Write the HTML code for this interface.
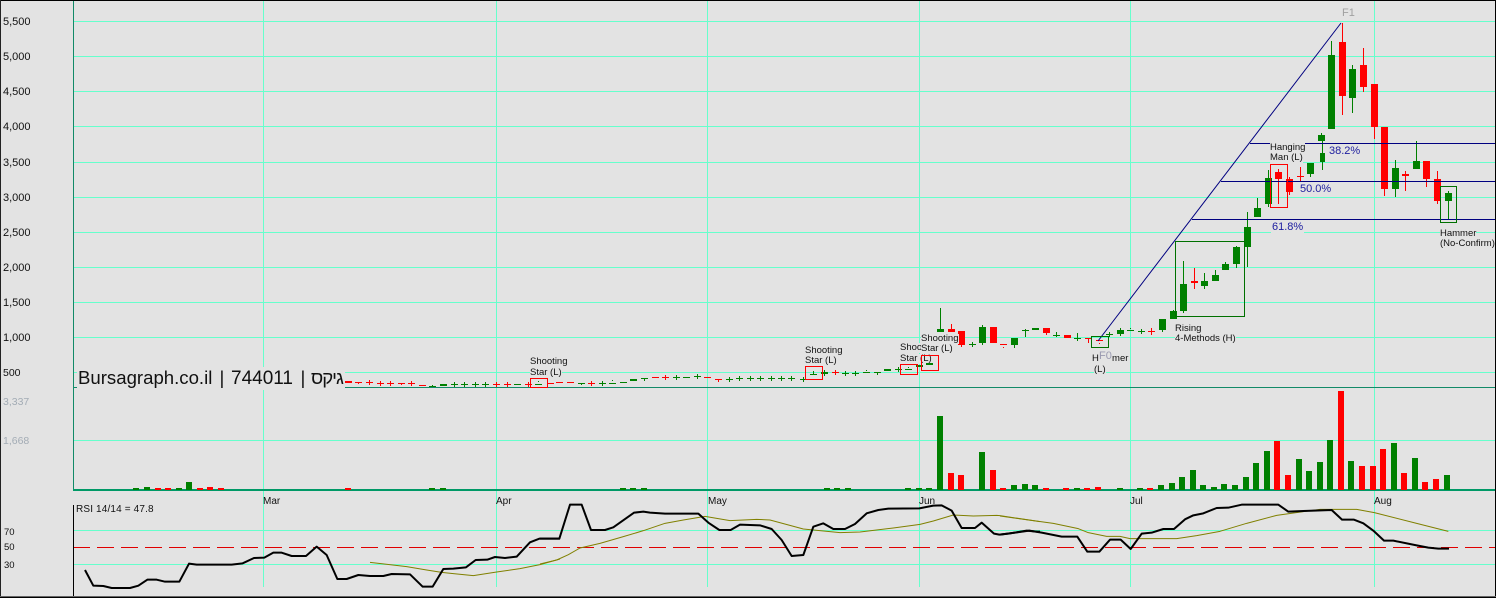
<!DOCTYPE html>
<html><head><meta charset="utf-8"><title>Chart</title>
<style>
html,body{margin:0;padding:0;background:#e3e3e3;}
#c{position:relative;width:1496px;height:598px;overflow:hidden;background:#e3e3e3;font-family:"Liberation Sans",Arial,sans-serif;}
svg{position:absolute;left:0;top:0;}
.t{position:absolute;white-space:pre;background:#e3e3e3;font-size:9.5px;line-height:10px;height:10px;color:#111;}
.a{position:absolute;white-space:pre;font-size:11px;line-height:12px;color:#111;}
.g{color:#a3acb5;font-size:10.5px;}
.f{position:absolute;white-space:pre;background:#e3e3e3;font-size:11px;line-height:12px;color:#2020a0;}
.m{position:absolute;white-space:pre;font-size:10px;line-height:12px;color:#111;}
.h{position:absolute;top:366px;white-space:pre;font-size:18.6px;line-height:23px;color:#111;font-family:'Liberation Sans','Noto Sans CJK JP',sans-serif;}
</style></head><body>
<div id="c">
<svg width="1496" height="598" viewBox="0 0 1496 598" shape-rendering="crispEdges" fill="none">
<!-- grid -->
<path stroke="#66ffcc" d="M73 21.5H1495M73 56.5H1495M73 91.5H1495M73 126.5H1495M73 162.5H1495M73 197.5H1495M73 232.5H1495M73 267.5H1495M73 302.5H1495M73 337.5H1495M73 372.5H1495M73 440.5H1495M73 530.5H1495M73 564.5H1495M263.5 0V587M496.5 0V587M707.5 0V587M919.5 0V587M1130.5 0V587M1374.5 0V587"/>
<path stroke="#e00000" stroke-dasharray="17 7" d="M73 547.5H1495"/>
<!-- axes -->
<path stroke="#128a68" d="M73.5 0V490M73 387.5H1495"/>
<rect x="73" y="489" width="1422" height="2" fill="#009966"/>
<path stroke="#000" d="M73.5 505V596"/>
<!-- volume -->
<path fill="#008000" d="M133 488h6v2h-6zM144 487h6v3h-6zM176 488h6v2h-6zM186 482h6v8h-6zM429 488h6v2h-6zM440 488h6v2h-6zM620 488h6v2h-6zM630 488h6v2h-6zM641 488h6v2h-6zM824 488h6v2h-6zM834 488h6v2h-6zM845 488h6v2h-6zM905 488h6v2h-6zM916 488h6v2h-6zM926 488h6v2h-6zM937 416h6v74h-6zM979 452h6v38h-6zM1011 485h6v5h-6zM1022 484h6v6h-6zM1032 485h6v5h-6zM1074 488h6v2h-6zM1117 488h6v2h-6zM1137 488h6v2h-6zM1158 485h6v5h-6zM1169 483h6v7h-6zM1179 477h6v13h-6zM1190 470h6v20h-6zM1200 485h6v5h-6zM1211 487h6v3h-6zM1221 484h6v6h-6zM1232 485h6v5h-6zM1243 477h6v13h-6zM1253 463h6v27h-6zM1264 451h6v39h-6zM1296 459h6v31h-6zM1306 471h6v19h-6zM1317 462h6v28h-6zM1327 440h6v50h-6zM1348 461h6v29h-6zM1391 443h6v47h-6zM1412 458h6v32h-6zM1444 475h6v15h-6z"/>
<path fill="#ff0000" d="M155 488h6v2h-6zM165 488h6v2h-6zM197 488h6v2h-6zM207 487h6v3h-6zM218 488h6v2h-6zM345 488h6v2h-6zM948 473h6v17h-6zM958 475h6v15h-6zM990 470h6v20h-6zM1000 488h6v2h-6zM1043 488h6v2h-6zM1063 488h6v2h-6zM1084 488h6v2h-6zM1095 487h6v3h-6zM1147 488h6v2h-6zM1274 441h6v49h-6zM1285 475h6v15h-6zM1338 391h6v99h-6zM1359 466h6v24h-6zM1370 466h6v24h-6zM1380 449h6v41h-6zM1401 473h6v17h-6zM1422 482h6v8h-6zM1433 479h6v11h-6z"/>
<!-- green candles -->
<path fill="#008000" d="M440 384h7v2h-7zM630 379h7v2h-7zM884 369h7v2h-7zM916 365h7v2h-7zM937 329h7v3h-7zM979 327h7v16h-7zM1011 338h7v7h-7zM1032 328h7v2h-7zM1117 330h7v4h-7zM1159 319h7v11h-7zM1170 311h7v8h-7zM1180 284h7v27h-7zM1201 281h7v5h-7zM1212 275h7v6h-7zM1222 264h7v6h-7zM1233 247h7v17h-7zM1244 227h7v20h-7zM1254 208h7v9h-7zM1265 178h7v26h-7zM1307 163h7v11h-7zM1318 135h7v6h-7zM1320 153h5v9h-5zM1328 55h7v74h-7zM1349 69h7v29h-7zM1392 168h7v21h-7zM1413 161h7v8h-7zM1445 193h7v8h-7zM821 372h7v2h-7z"/>
<path stroke="#008000" d="M429 386.5h7M432.5 385v1M451 384.5h7M454.5 382v5M461 384.5h7M464.5 382v5M472 384.5h7M475.5 382v5M482 384.5h7M485.5 382v5M514 384.5h7M535 384.5h7M538.5 381v1M578 383.5h7M581.5 383v2M599 383.5h7M602.5 381v5M609 383.5h7M612.5 380v1M620 382.5h7M641 378.5h7M644.5 378v3M673 377.5h7M676.5 375v5M683 377.5h7M694 376.5h7M697.5 374v5M726 379.5h7M729.5 377v5M736 378.5h7M739.5 376v5M747 378.5h7M750.5 376v5M757 378.5h7M760.5 376v5M768 378.5h7M771.5 376v5M778 378.5h7M781.5 376v5M788 378.5h7M791.5 376v5M800 379.5h7M803.5 377v5M810 374.5h7M813.5 371v3M824.5 370v6M842 373.5h7M845.5 371v5M852 373.5h7M855.5 371v5M863 372.5h7M866.5 370v1M874 372.5h7M877.5 372v3M895 369.5h7M898.5 367v5M905 369.5h7M908.5 367v1M940.5 308V329M969 344.5h7M972.5 342v5M982.5 325v20M1014.5 345v3M1025.5 329v8M1022 330.5h7M1053 335.5h7M1056.5 332v5M1074 338.5h7M1077.5 333v8M1106 334.5h7M1109.5 332v5M1120.5 328v8M1127 330.5h7M1130.5 328v1M1138 331.5h7M1141.5 329v5M1162.5 330v2M1173.5 310v1M1183.5 261v52M1204.5 273v16M1215.5 270v5M1225.5 262v2M1236.5 246v22M1247.5 212v15M1247.5 247v20M1257.5 198v10M1268.5 170v37M1310.5 174v3M1321.5 133v2M1322.5 140v30M1331.5 41v14M1352.5 65v48M1395.5 160v37M1416.5 141v20M1448.5 191v28"/>
<!-- red candles -->
<path fill="#ff0000" d="M345 381h7v2h-7zM948 329h7v3h-7zM958 331h7v14h-7zM990 327h7v16h-7zM1043 328h7v5h-7zM1064 335h7v3h-7zM1275 172h7v7h-7zM1286 179h7v13h-7zM1339 42h7v54h-7zM1360 65h7v22h-7zM1371 84h7v43h-7zM1381 127h7v62h-7zM1423 161h7v18h-7zM1434 179h7v22h-7z"/>
<path stroke="#ff0000" d="M355 382.5h7M358.5 382v2M366 382.5h7M369.5 380v5M377 383.5h7M380.5 381v5M387 383.5h7M390.5 381v5M398 383.5h7M401.5 383v2M408 383.5h7M411.5 381v5M419 385.5h7M493 384.5h7M496.5 382v5M504 384.5h7M507.5 382v5M525 384.5h7M528.5 382v5M547 383.5h7M556 382.5h7M567 382.5h7M588 383.5h7M591.5 381v5M652 377.5h7M662 377.5h7M665.5 375v5M704 377.5h7M715 379.5h7M718.5 379v3M832 372.5h7M835.5 370v5M951.5 324v5M961.5 345v2M1000 344.5h7M1003.5 347v1M1046.5 333v2M1085 338.5h7M1088.5 338v5M1096 340.5h7M1099.5 343v1M1148 331.5h7M1151.5 328v7M1191 281.5h7M1191 282.5h7M1194.5 268v21M1278.5 169v35M1289.5 177v18M1297 176.5h7M1300.5 167v15M1342.5 23v92M1363.5 48v44M1374.5 127v12M1384.5 189v7M1402 174.5h7M1402 175.5h7M1405.5 171v20M1426.5 179v8M1437.5 171v33"/>
<!-- fib -->
<path stroke="#000080" d="M1250 143.5H1495M1221 181.5H1495M1192 219.5H1495"/>
<path stroke="#000080" shape-rendering="auto" d="M1098 341L1341 23"/>
<!-- rsi -->
<g shape-rendering="auto" stroke-linejoin="round">
<polyline transform="translate(60 490) scale(.33333)" stroke="#808000" stroke-width="3" points="930,217 1040,230 1100,240 1145,247 1180,251 1240,257 1310,246 1380,236 1440,224 1500,207"/>
<polyline transform="translate(540 490) scale(.33333)" stroke="#808000" stroke-width="3" points="0,222 50,210 85,194 120,174 180,160 250,140 310,122 375,100 430,90 495,79 570,92 650,88 690,90 790,117 900,128 960,126 1060,114 1140,103 1180,93 1240,75 1300,78 1370,76 1380,77 1500,95"/>
<polyline transform="translate(1000 490) scale(.33333)" stroke="#808000" stroke-width="3" points="0,78 100,92 160,100 235,116 265,128 320,139 360,139 390,146 530,146 590,137 660,124 740,100 830,76 910,65 960,58 1070,58 1123,68 1250,100 1345,124"/>
<polyline transform="translate(60 490) scale(.33333)" stroke="#000" stroke-width="6" points="75,240 100,287 130,288 155,294 210,294 235,287 262,269 290,269 315,275 358,275 387,221 410,224 515,224 548,220 582,204 613,203 640,188 665,188 695,198 738,198 770,170 800,195 832,267 860,267 895,255 930,258 970,258 995,252 1050,253 1088,290 1118,290 1150,237 1180,236 1218,232 1247,210 1282,209 1305,201 1335,204 1370,200 1410,157 1438,146 1500,146"/>
<polyline transform="translate(540 490) scale(.33333)" stroke="#000" stroke-width="6" points="0,146 58,146 90,44 125,44 153,120 195,120 220,112 282,68 310,65 330,68 375,71 475,71 505,98 538,120 572,120 600,104 660,106 695,117 725,150 755,198 790,195 820,110 850,100 880,117 915,117 945,102 980,70 1015,60 1045,56 1138,55 1180,47 1205,46 1235,62 1265,114 1305,114 1325,98 1362,131 1378,134 1405,131 1460,122 1490,125 1500,125"/>
<polyline transform="translate(1000 490) scale(.33333)" stroke="#000" stroke-width="6" points="0,134 88,122 125,128 185,140 232,140 262,185 298,185 330,149 362,149 392,177 425,131 455,128 490,117 522,117 555,88 580,76 610,70 650,54 685,53 725,44 835,44 865,65 910,63 995,60 1026,89 1062,89 1090,100 1120,122 1152,152 1180,152 1250,166 1285,173 1315,176 1347,176"/>
</g>
<!-- frame -->
<rect x="0" y="0" width="1496" height="1" fill="#000"/>
<rect x="0" y="0" width="1" height="598" fill="#222"/>
<rect x="1495" y="0" width="1" height="598" fill="#000"/>
<rect x="0" y="596" width="1496" height="1" fill="#666"/>
<rect x="0" y="597" width="1496" height="1" fill="#000"/>
</svg>

<!-- axis labels -->
<div class="a" style="left:3px;top:16px">5,500</div>
<div class="a" style="left:3px;top:51px">5,000</div>
<div class="a" style="left:3px;top:86px">4,500</div>
<div class="a" style="left:3px;top:121px">4,000</div>
<div class="a" style="left:3px;top:157px">3,500</div>
<div class="a" style="left:3px;top:192px">3,000</div>
<div class="a" style="left:3px;top:227px">2,500</div>
<div class="a" style="left:3px;top:262px">2,000</div>
<div class="a" style="left:3px;top:297px">1,500</div>
<div class="a" style="left:3px;top:332px">1,000</div>
<div class="a" style="left:3px;top:367px;font-size:10.5px">500</div>
<div class="a g" style="left:3px;top:396px">3,337</div>
<div class="a g" style="left:3px;top:435px">1,668</div>
<div class="a" style="left:4px;top:527px;font-size:9.5px">70</div>
<div class="a" style="left:4px;top:542px;font-size:9.5px">50</div>
<div class="a" style="left:4px;top:560px;font-size:9.5px">30</div>

<!-- months -->
<div class="m" style="left:263px;top:496px">Mar</div>
<div class="m" style="left:496px;top:496px">Apr</div>
<div class="m" style="left:708px;top:496px">May</div>
<div class="m" style="left:919px;top:496px">Jun</div>
<div class="m" style="left:1130px;top:496px">Jul</div>
<div class="m" style="left:1374px;top:496px">Aug</div>
<div class="m" style="left:76px;top:504px;letter-spacing:.15px">RSI 14/14 = 47.8</div>

<!-- title -->
<div style="position:absolute;left:77px;top:367px;width:268px;height:23px;background:#e3e3e3"></div>
<div class="h" style="left:78px">Bursagraph.co.il</div>
<div class="h" style="left:219.5px">|</div>
<div class="h" style="left:231px;top:367px;font-size:19px">744011</div>
<div class="h" style="left:300.5px">|</div>
<div class="h" style="left:311px;letter-spacing:-1px">גיקס</div>

<!-- pattern labels -->
<div class="t" style="left:530px;top:357px">Shooting</div>
<div class="t" style="left:530px;top:368px">Star (L)</div>
<div class="t" style="left:805px;top:346px">Shooting</div>
<div class="t" style="left:805px;top:356px">Star (L)</div>
<div class="t" style="left:900px;top:343px">Shooting</div>
<div class="t" style="left:900px;top:354px">Star (L)</div>
<div class="t" style="left:921px;top:334px">Shooting</div>
<div class="t" style="left:921px;top:344px">Star (L)</div>
<div class="t" style="left:1092px;top:354px">Hammer</div>
<div class="t" style="left:1094px;top:365px">(L)</div>
<div class="f" style="left:1099px;top:350px;color:#9a9ab0">F0</div>
<div class="t" style="left:1175px;top:324px">Rising</div>
<div class="t" style="left:1175px;top:334px">4-Methods (H)</div>
<div class="t" style="left:1270px;top:143px">Hanging</div>
<div class="t" style="left:1270px;top:153px">Man (L)</div>
<div class="t" style="left:1440px;top:229px">Hammer</div>
<div class="t" style="left:1440px;top:239px">(No-Confirm)</div>
<div class="f" style="left:1329px;top:145px;padding-right:1px">38.2%</div>
<div class="f" style="left:1300px;top:183px;padding-right:1px">50.0%</div>
<div class="f" style="left:1271px;top:221px;padding:0 1px">61.8%</div>
<div class="a" style="left:1342px;top:7px;color:#a0a0a0">F1</div>

<!-- boxes over labels -->
<svg width="1496" height="598" viewBox="0 0 1496 598" shape-rendering="crispEdges" fill="none">
<path fill="#008000" d="M926 363h7v2h-7z"/>
<path stroke="#ff0000" d="M530.5 378.5h17v9h-17zM805.5 366.5h17v13h-17zM900.5 364.5h17v10h-17zM921.5 355.5h17v15h-17zM1270.5 164.5h17v43h-17z"/>
<path stroke="#007000" d="M1091.5 336.5h17v11h-17zM1175.5 241.5h69v75h-69zM1440.5 186.5h16v36h-16z"/>
</svg>
</div>
</body></html>
